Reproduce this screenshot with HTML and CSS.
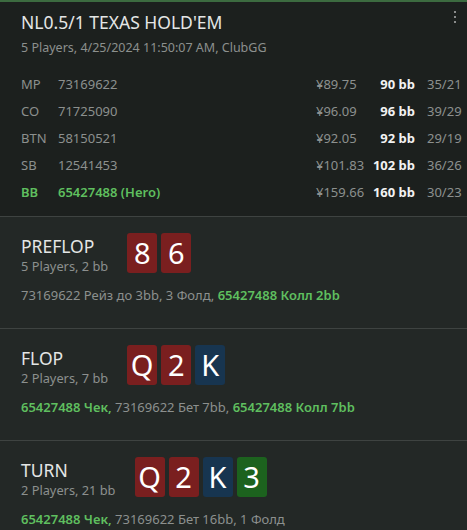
FILE: index.html
```html
<!DOCTYPE html>
<html lang="ru">
<head>
  <meta charset="UTF-8">
  <title>Hand history</title>
  <link rel="stylesheet" href="styles.css">
</head>
<body>
  <div class="hand">
    <div class="header">
      <div class="menu"><span></span><span></span><span></span></div>
      <h1 class="title">NL0.5/1 TEXAS HOLD'EM</h1>
      <div class="subtitle">5 Players, 4/25/2024 11:50:07 AM, ClubGG</div>
      <div class="players">
        <div class="player">
          <span class="pos">MP</span><span class="name">73169622</span>
          <span class="money">¥89.75</span><span class="stack">90 bb</span><span class="stat">35/21</span>
        </div>
        <div class="player">
          <span class="pos">CO</span><span class="name">71725090</span>
          <span class="money">¥96.09</span><span class="stack">96 bb</span><span class="stat">39/29</span>
        </div>
        <div class="player">
          <span class="pos">BTN</span><span class="name">58150521</span>
          <span class="money">¥92.05</span><span class="stack">92 bb</span><span class="stat">29/19</span>
        </div>
        <div class="player">
          <span class="pos">SB</span><span class="name">12541453</span>
          <span class="money">¥101.83</span><span class="stack">102 bb</span><span class="stat">36/26</span>
        </div>
        <div class="player hero">
          <span class="pos">BB</span><span class="name">65427488 (Hero)</span>
          <span class="money">¥159.66</span><span class="stack">160 bb</span><span class="stat">30/23</span>
        </div>
      </div>
    </div>

    <div class="street">
      <div class="street-top">
        <div class="street-info">
          <div class="street-name">PREFLOP</div>
          <div class="street-sub">5 Players, 2 bb</div>
        </div>
        <div class="cards">
          <span class="card red">8</span>
          <span class="card red">6</span>
        </div>
      </div>
      <div class="actions">73169622 Рейз до 3bb, 3 Фолд, <b>65427488 Колл 2bb</b></div>
    </div>

    <div class="street">
      <div class="street-top">
        <div class="street-info">
          <div class="street-name">FLOP</div>
          <div class="street-sub">2 Players, 7 bb</div>
        </div>
        <div class="cards">
          <span class="card red">Q</span>
          <span class="card red">2</span>
          <span class="card blue">K</span>
        </div>
      </div>
      <div class="actions"><b>65427488 Чек,</b> 73169622 Бет 7bb, <b>65427488 Колл 7bb</b></div>
    </div>

    <div class="street">
      <div class="street-top">
        <div class="street-info">
          <div class="street-name">TURN</div>
          <div class="street-sub">2 Players, 21 bb</div>
        </div>
        <div class="cards">
          <span class="card red">Q</span>
          <span class="card red">2</span>
          <span class="card blue">K</span>
          <span class="card green">3</span>
        </div>
      </div>
      <div class="actions"><b>65427488 Чек,</b> 73169622 Бет 16bb, 1 Фолд</div>
    </div>
  </div>
</body>
</html>
```

FILE: styles.css
```css
body {
  margin: 0;
  background-color: #232826;
  font-family: "Noto Sans", "Open Sans", sans-serif;
  color: #8c908e;
  font-size: 13px;
}

.hand {
  width: 467px;
  height: 530px;
  overflow: hidden;
}

.header {
  position: relative;
  background-color: #1c201e;
  border-top: 2px solid #3c6b40;
  padding: 8px 8px 10px 21px;
  border-bottom: 1px solid #3e4341;
}

.menu {
  position: absolute;
  top: 9px;
  right: 11px;
  display: flex;
  flex-direction: column;
  gap: 3px;
}

.menu span {
  width: 2px;
  height: 2px;
  background-color: #8a8c8b;
}

.title {
  margin: 0;
  font-size: 17.5px;
  font-weight: 400;
  line-height: 24px;
  color: #e4e6e5;
}

.subtitle {
  margin-top: 5px;
  line-height: 18px;
  font-size: 12.5px;
}

.players {
  margin-top: 14px;
}

.player {
  display: grid;
  grid-template-columns: 37px 258px 50px 49px 44px;
  line-height: 27px;
}

.stack {
  text-align: right;
  font-weight: 700;
  color: #f2f2f2;
}

.stat {
  padding-left: 12px;
}

.hero .pos,
.hero .name {
  color: #5fbf5f;
  font-weight: 600;
}

.street {
  padding: 16px 8px 23px 21px;
  border-bottom: 1px solid #3e4341;
}

.street-top {
  display: flex;
  gap: 19px;
  height: 40px;
}

.street-info {
  padding-top: 2px;
}

.street-name {
  font-size: 17.5px;
  line-height: 22px;
  color: #e4e6e5;
}

.street-sub {
  line-height: 18px;
  font-size: 12.8px;
}

.cards {
  display: flex;
  gap: 4px;
}

.card {
  width: 30px;
  height: 40px;
  border-radius: 3px;
  color: #ffffff;
  font-size: 29px;
  line-height: 40px;
  text-align: center;
}

.red {
  background-color: #7a1f1f;
}

.blue {
  background-color: #173550;
}

.green {
  background-color: #1c621e;
}

.actions {
  margin-top: 12px;
  line-height: 20px;
  font-size: 13px;
}

.actions b {
  color: #5fbf5f;
  font-weight: 600;
}
```
